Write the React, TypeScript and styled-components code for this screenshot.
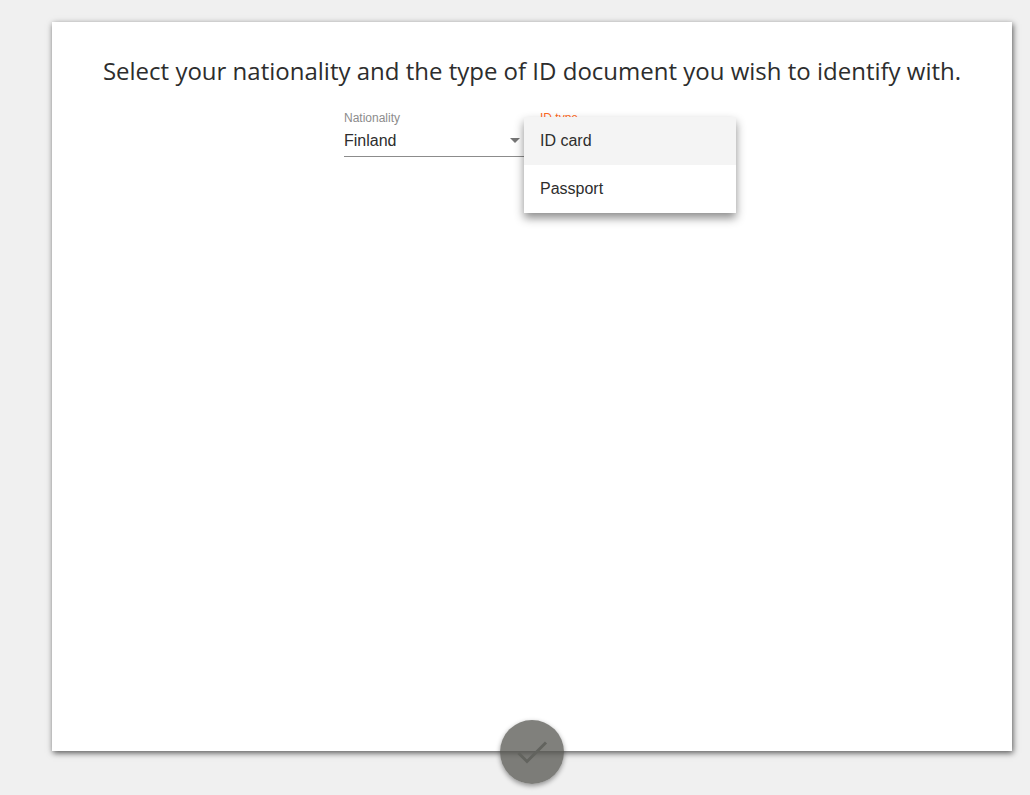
import React, { useState } from "react";
import styled, { createGlobalStyle, css } from "styled-components";

const GlobalStyle = createGlobalStyle`
  *, *::before, *::after { box-sizing: border-box; }
  body {
    margin: 0;
    background: #f0f0f0;
    color: #2d2d2d;
    font-family: "Liberation Sans", Arial, sans-serif;
  }
`;

const Page = styled.main`
  display: flex;
  flex-direction: column;
  min-height: 100vh;
  padding: 22px 18px 44px 52px;
`;

const Card = styled.form`
  position: relative;
  flex: 1;
  display: flex;
  flex-direction: column;
  align-items: center;
  gap: 24px;
  padding: 33px 24px 56px;
  background: #fff;
  box-shadow: 1px 2px 6px rgba(0, 0, 0, 0.65);
`;

const Title = styled.h1`
  margin: 0;
  font-family: "Open Sans", sans-serif;
  font-size: 24px;
  font-weight: 400;
  line-height: 32px;
  text-align: center;
`;

const Fields = styled.div`
  display: flex;
  gap: 16px;
`;

const Field = styled.div`
  position: relative;
  display: flex;
  flex-direction: column;
  width: 180px;
`;

const Label = styled.label<{ $active?: boolean }>`
  font-size: 12px;
  line-height: 14px;
  color: ${(p) => (p.$active ? "#ff6a1f" : "#8c8c8c")};
`;

const SelectBox = styled.div`
  display: flex;
  align-items: center;
  height: 32px;
  border-bottom: 1px solid #8c8c8c;
`;

const Select = styled.select`
  flex: 1;
  min-width: 0;
  padding: 0;
  border: 0;
  outline: 0;
  appearance: none;
  background: transparent;
  color: inherit;
  font: inherit;
  font-size: 16px;
  line-height: 32px;
`;

const Arrow = styled.span`
  margin-right: 4px;
  border: 5px solid transparent;
  border-top-color: #757575;
  border-bottom: 0;
  pointer-events: none;
`;

const Menu = styled.div`
  position: absolute;
  top: 6px;
  left: -16px;
  z-index: 1;
  display: flex;
  flex-direction: column;
  width: 212px;
  background: #fff;
  box-shadow: 0 5px 9px rgba(0, 0, 0, 0.45);
`;

const Option = styled.button<{ $selected: boolean }>`
  height: 48px;
  padding: 0 16px;
  border: 0;
  background: #fff;
  color: inherit;
  font: inherit;
  font-size: 16px;
  text-align: left;
  cursor: pointer;
  ${(p) =>
    p.$selected &&
    css`
      background: #f4f4f4;
    `}
`;

const Confirm = styled.button`
  position: absolute;
  bottom: -33px;
  left: calc(50% - 32px);
  display: grid;
  place-items: center;
  width: 64px;
  height: 64px;
  padding: 0;
  border: 0;
  border-radius: 50%;
  background: rgba(84, 84, 78, 0.74);
  box-shadow: 0 2px 5px rgba(0, 0, 0, 0.4);
`;

const idTypes = ["ID card", "Passport"];

export default function App() {
  const [idType, setIdType] = useState(idTypes[0]);

  return (
    <>
      <GlobalStyle />
      <Page>
        <Card onSubmit={(e: React.FormEvent) => e.preventDefault()}>
          <Title>
            Select your nationality and the type of ID document you wish to identify with.
          </Title>
          <Fields>
            <Field>
              <Label htmlFor="nationality">Nationality</Label>
              <SelectBox>
                <Select id="nationality" defaultValue="Finland">
                  <option>Finland</option>
                </Select>
                <Arrow />
              </SelectBox>
            </Field>
            <Field>
              <Label id="id-type-label" htmlFor="id-type" $active>
                ID type
              </Label>
              <SelectBox>
                <Select
                  id="id-type"
                  value={idType}
                  onChange={(e: React.ChangeEvent<HTMLSelectElement>) => setIdType(e.target.value)}
                >
                  {idTypes.map((type) => (
                    <option key={type}>{type}</option>
                  ))}
                </Select>
                <Arrow />
              </SelectBox>
              <Menu role="listbox" aria-labelledby="id-type-label">
                {idTypes.map((type) => (
                  <Option
                    key={type}
                    type="button"
                    role="option"
                    aria-selected={type === idType}
                    $selected={type === idType}
                    onClick={() => setIdType(type)}
                  >
                    {type}
                  </Option>
                ))}
              </Menu>
            </Field>
          </Fields>
          <Confirm type="submit" aria-label="Confirm">
            <svg width="32" height="32" viewBox="0 0 32 32" fill="none" aria-hidden="true">
              <path d="M2.5 17L11 25.5L30 6.5" stroke="#62635e" strokeWidth="3" />
            </svg>
          </Confirm>
        </Card>
      </Page>
    </>
  );
}
